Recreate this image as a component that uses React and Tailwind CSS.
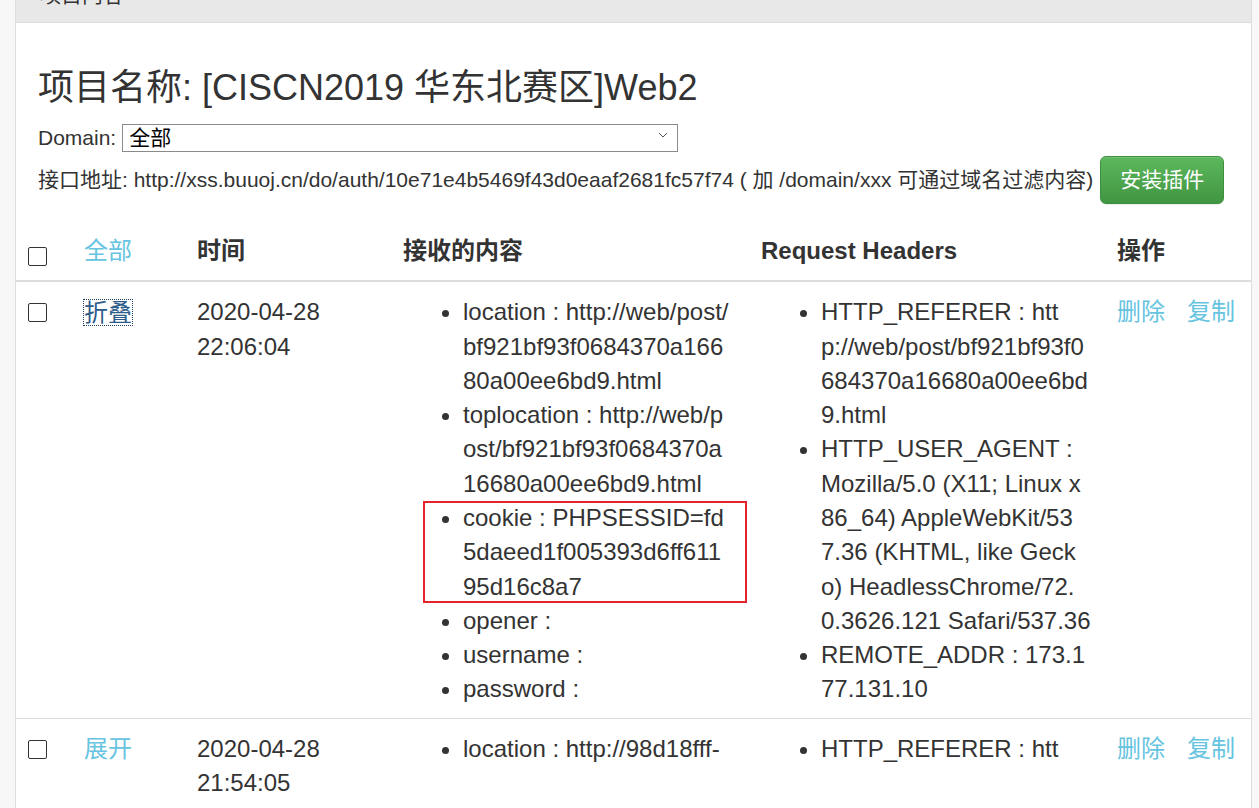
import React from 'react';

const rows = [
  {
    toggle: '折叠',
    focused: true,
    date: '2020-04-28',
    time: '22:06:04',
    mark: 2,
    content: [
      ['location : http://web/post/', 'bf921bf93f0684370a166', '80a00ee6bd9.html'],
      ['toplocation : http://web/p', 'ost/bf921bf93f0684370a', '16680a00ee6bd9.html'],
      ['cookie : PHPSESSID=fd', '5daeed1f005393d6ff611', '95d16c8a7'],
      ['opener :'],
      ['username :'],
      ['password :'],
    ],
    headers: [
      ['HTTP_REFERER : htt', 'p://web/post/bf921bf93f0', '684370a16680a00ee6bd', '9.html'],
      [
        'HTTP_USER_AGENT :',
        'Mozilla/5.0 (X11; Linux x',
        '86_64) AppleWebKit/53',
        '7.36 (KHTML, like Geck',
        'o) HeadlessChrome/72.',
        '0.3626.121 Safari/537.36',
      ],
      ['REMOTE_ADDR : 173.1', '77.131.10'],
    ],
  },
  {
    toggle: '展开',
    date: '2020-04-28',
    time: '21:54:05',
    content: [['location : http://98d18fff-']],
    headers: [['HTTP_REFERER : htt']],
  },
];

const Check = ({ className }) => (
  <input
    type="checkbox"
    className={`block appearance-none w-[19px] h-[19px] border border-[#333] rounded-[2px] bg-white ${className}`}
  />
);

const Items = ({ items, mark }) => (
  <ul className="list-disc pl-[60px] m-0 marker:text-[#333]">
    {items.map((lines, i) => (
      <li key={i} className="relative whitespace-nowrap">
        {mark === i && (
          <span className="absolute left-[-40px] top-0 w-[324px] h-[102px] border-2 border-[#e5232b]" />
        )}
        {lines.map((l, j) => (
          <div key={j}>{l}</div>
        ))}
      </li>
    ))}
  </ul>
);

export default function App() {
  return (
    <div className="min-h-screen bg-[#f7f7f7] pl-[15px] pr-[7px] font-['Liberation_Sans','Noto_Sans_CJK_SC',sans-serif] text-[#333]">
      <div className="bg-white border-x border-[#dddddd]">
        {/* panel heading, scrolled mostly out of view */}
        <div className="h-[23px] overflow-hidden bg-[#e8e8e8] border-b border-[#dddddd] px-[24px]">
          <div className="-mt-[20px] leading-[30px] text-[21px]">项目内容</div>
        </div>

        <div className="px-[22px] pt-[45px]">
          <div className="text-[36px] leading-[40px]">项目名称: [CISCN2019 华东北赛区]Web2</div>

          <div className="mt-[16px] flex items-center h-[28px] text-[21px]">
            <span>Domain:</span>
            <div className="relative ml-[6px]">
              <select className="appearance-none w-[556px] h-[28px] border border-[#8a8a8a] bg-white pl-[6px] text-[21px] leading-[26px] text-black">
                <option>全部</option>
              </select>
              <svg
                className="absolute right-[10px] top-[10px] pointer-events-none"
                width="10"
                height="6"
                viewBox="0 0 10 6"
              >
                <path d="M1 1l4 4 4-4" fill="none" stroke="#555" strokeWidth="1" />
              </svg>
            </div>
          </div>

          <div className="mt-[4px] flex items-center h-[48px] text-[21px] whitespace-nowrap">
            <span>
              接口地址: http://xss.buuoj.cn/do/auth/10e71e4b5469f43d0eaaf2681fc57f74 ( 加 /domain/xxx 可通过域名过滤内容)
            </span>
            <button className="ml-[7px] h-[48px] px-[19px] rounded-[6px] border border-[#3e8f3e] bg-gradient-to-b from-[#5cb85c] to-[#419641] text-white text-[21px] shadow-[inset_0_1px_0_rgba(255,255,255,0.15),0_1px_1px_rgba(0,0,0,0.075)]">
              安装插件
            </button>
          </div>
        </div>

        <table className="mt-[18px] w-full table-fixed border-collapse text-[24px] leading-[1.42857]">
          <colgroup>
            <col className="w-[56px]" />
            <col className="w-[113px]" />
            <col className="w-[206px]" />
            <col className="w-[358px]" />
            <col className="w-[356px]" />
            <col />
          </colgroup>
          <thead>
            <tr className="border-b-2 border-[#dddddd]">
              <th className="p-[12px] align-top text-left">
                <Check className="mt-[13px]" />
              </th>
              <th className="p-[12px] align-top text-left font-normal text-[#66c4e0]">全部</th>
              <th className="p-[12px] align-top text-left">时间</th>
              <th className="p-[12px] align-top text-left">接收的内容</th>
              <th className="p-[12px] align-top text-left">Request Headers</th>
              <th className="p-[12px] align-top text-left">操作</th>
            </tr>
          </thead>
          <tbody>
            {rows.map((row, i) => (
              <tr key={i} className={i > 0 ? 'border-t border-[#dddddd]' : ''}>
                <td className="pt-[13px] px-[12px] pb-[11px] align-top">
                  <Check className="mt-[8px]" />
                </td>
                <td className="pt-[13px] px-[12px] pb-[11px] align-top">
                  {row.focused ? (
                    <span className="inline-block mt-[5px] leading-[25px] text-[#2d5b8a] outline-1 outline-dotted outline-[#1f3f66]">
                      {row.toggle}
                    </span>
                  ) : (
                    <span className="text-[#66c4e0]">{row.toggle}</span>
                  )}
                </td>
                <td className="pt-[13px] px-[12px] pb-[11px] align-top">
                  <div>{row.date}</div>
                  <div>{row.time}</div>
                </td>
                <td className="pt-[13px] px-[12px] pb-[11px] align-top">
                  <Items items={row.content} mark={row.mark} />
                </td>
                <td className="pt-[13px] px-[12px] pb-[11px] align-top">
                  <Items items={row.headers} />
                </td>
                <td className="pt-[13px] px-[12px] pb-[11px] align-top">
                  <div className="flex gap-[22px] text-[#66c4e0]">
                    <span>删除</span>
                    <span>复制</span>
                  </div>
                </td>
              </tr>
            ))}
          </tbody>
        </table>
      </div>
    </div>
  );
}
